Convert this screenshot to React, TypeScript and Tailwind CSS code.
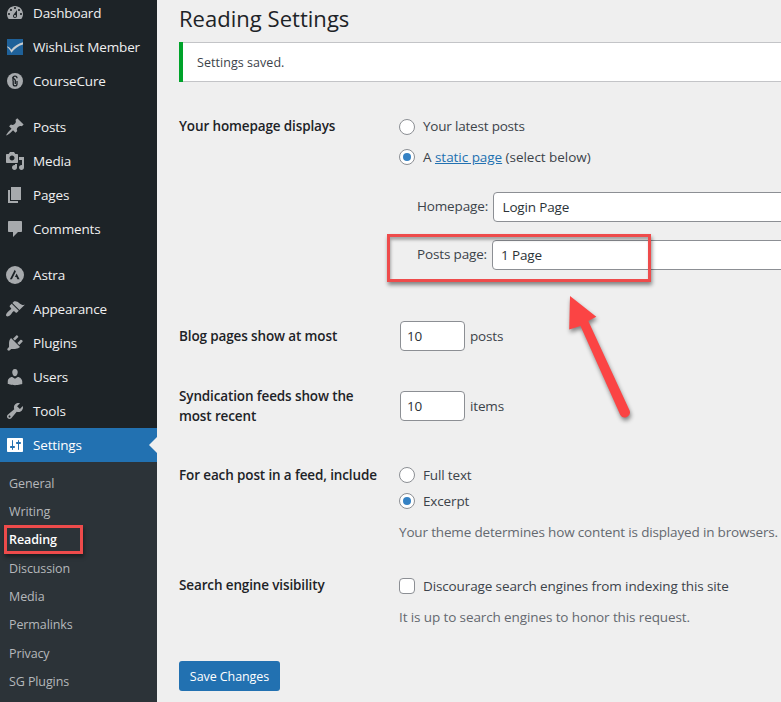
import React from 'react';
import clsx from 'clsx';

const menuGroups = [
  [
    {
      name: 'Dashboard',
      path: 'M3.76 16h12.48c1.1-1.37 1.76-3.11 1.76-5 0-4.42-3.58-8-8-8s-8 3.58-8 8c0 1.89.66 3.63 1.76 5zM10 4c.55 0 1 .45 1 1s-.45 1-1 1-1-.45-1-1 .45-1 1-1zM6 6c.55 0 1 .45 1 1s-.45 1-1 1-1-.45-1-1 .45-1 1-1zm8 0c.55 0 1 .45 1 1s-.45 1-1 1-1-.45-1-1 .45-1 1-1zm-5.37 5.55L12 7v6c0 1.1-.9 2-2 2s-2-.9-2-2c0-.57.24-1.08.63-1.45zM4 10c.55 0 1 .45 1 1s-.45 1-1 1-1-.45-1-1 .45-1 1-1zm12 0c.55 0 1 .45 1 1s-.45 1-1 1-1-.45-1-1 .45-1 1-1zm-5 3c0-.55-.45-1-1-1s-1 .45-1 1 .45 1 1 1 1-.45 1-1z',
    },
    { name: 'WishList Member' },
    { name: 'CourseCure' },
  ],
  [
    {
      name: 'Posts',
      path: 'M10.44 3.02l1.82-1.82 6.36 6.35-1.83 1.82c-1.05-.68-2.48-.57-3.41.36l-.75.75c-.92.93-1.04 2.35-.35 3.41l-1.83 1.82-2.41-2.41-2.8 2.79c-.42.42-3.38 2.71-3.8 2.29s1.86-3.39 2.28-3.81l2.79-2.79L4.1 9.36l1.83-1.82c1.05.69 2.48.57 3.4-.36l.75-.75c.93-.92 1.05-2.35.36-3.41z',
    },
    {
      name: 'Media',
      path: 'M13 11V4c0-.55-.45-1-1-1h-1.67L9 1H5L3.67 3H2c-.55 0-1 .45-1 1v7c0 .55.45 1 1 1h10c.55 0 1-.45 1-1zM7 4.5c1.38 0 2.5 1.12 2.5 2.5S8.38 9.5 7 9.5 4.5 8.38 4.5 7 5.62 4.5 7 4.5zM14 6h5v10.5c0 1.38-1.12 2.5-2.5 2.5S14 17.88 14 16.5s1.12-2.5 2.5-2.5c.17 0 .34.02.5.05V9h-3V6zm-4 8.05V13h2v3.5c0 1.38-1.12 2.5-2.5 2.5S7 17.88 7 16.5 8.12 14 9.5 14c.17 0 .34.02.5.05z',
    },
    { name: 'Pages', path: 'M6 15V2h10v13H6zm-1 1h8v2H3V5h2v11z' },
    {
      name: 'Comments',
      path: 'M4 2h12c.55 0 1 .45 1 1v9c0 .55-.45 1-1 1h-3l-5 5v-5H4c-.55 0-1-.45-1-1V3c0-.55.45-1 1-1z',
    },
  ],
  [
    { name: 'Astra' },
    {
      name: 'Appearance',
      path: 'M14.48 11.06L7.41 3.99l1.5-1.5c.5-.56 2.3-.47 3.51.32 1.21.8 1.43 1.28 2.91 2.1 1.18.64 2.45 1.26 4.45.85zm-.71.71L6.7 4.7 4.93 6.47c-.39.39-.39 1.02 0 1.41l1.06 1.06c.39.39.39 1.03 0 1.42-.6.6-1.43 1.11-2.21 1.69-.35.26-.7.53-1.01.84C1.43 14.23.4 16.08 1.4 17.07c.99 1 2.84-.03 4.18-1.36.31-.31.58-.66.85-1.02.57-.78 1.08-1.61 1.69-2.21.39-.39 1.02-.39 1.41 0l1.06 1.06c.39.39 1.02.39 1.41 0z',
    },
    {
      name: 'Plugins',
      path: 'M13.11 4.36L9.87 7.6 8 5.73l3.24-3.24c.35-.34 1.05-.2 1.56.32.52.51.66 1.21.31 1.55zm-8 1.77l.91-1.12 9.01 9.01-1.19.84c-.71.71-2.63 1.16-3.82 1.16H6.14L4.9 17.26c-.59.59-1.54.59-2.12 0-.59-.58-.59-1.53 0-2.12l1.24-1.24v-3.88c0-1.13.4-3.19 1.09-3.89zm7.26 3.97l3.24-3.24c.34-.35 1.04-.21 1.55.31.52.51.66 1.21.31 1.55l-3.24 3.25z',
    },
    {
      name: 'Users',
      path: 'M10 9.25c-2.27 0-2.73-3.44-2.73-3.44C7 4.02 7.82 2 9.97 2c2.16 0 2.98 2.02 2.71 3.81 0 0-.41 3.44-2.68 3.44zm0 2.57L12.72 10c2.39 0 4.52 2.33 4.52 4.53v2.49s-3.65 1.13-7.24 1.13c-3.65 0-7.24-1.13-7.24-1.13v-2.49c0-2.25 1.94-4.48 4.47-4.48z',
    },
    {
      name: 'Tools',
      path: 'M16.68 9.77c-1.34 1.34-3.3 1.67-4.95.99l-5.41 6.52c-.99.99-2.59.99-3.58 0s-.99-2.59 0-3.57l6.52-5.42c-.68-1.65-.35-3.61.99-4.95 1.28-1.28 3.12-1.62 4.72-1.06l-2.89 2.89 2.82 2.82 2.86-2.87c.53 1.58.18 3.39-1.08 4.65zM3.81 16.21c.4.39 1.04.39 1.43 0 .4-.4.4-1.04 0-1.43-.39-.4-1.03-.4-1.43 0-.39.39-.39 1.03 0 1.43z',
    },
    {
      name: 'Settings',
      active: true,
      path: 'M18 16V4c0-.55-.45-1-1-1H3c-.55 0-1 .45-1 1v12c0 .55.45 1 1 1h14c.55 0 1-.45 1-1zM8 11h1c.55 0 1 .45 1 1s-.45 1-1 1H8v1.5c0 .28-.22.5-.5.5s-.5-.22-.5-.5V13H6c-.55 0-1-.45-1-1s.45-1 1-1h1V5.5c0-.28.22-.5.5-.5s.5.22.5.5V11zm5-2h-1c-.55 0-1-.45-1-1s.45-1 1-1h1V5.5c0-.28.22-.5.5-.5s.5.22.5.5V7h1c.55 0 1 .45 1 1s-.45 1-1 1h-1v5.5c0 .28-.22.5-.5.5s-.5-.22-.5-.5V9z',
    },
  ],
];

const subMenu = ['General', 'Writing', 'Reading', 'Discussion', 'Media', 'Permalinks', 'Privacy', 'SG Plugins'];

function MenuIcon({ name, path }: { name: string; path?: string }) {
  return (
    <svg viewBox="0 0 20 20" className="w-5 h-5 shrink-0" fill="currentColor">
      {path && <path d={path} fillRule="evenodd" />}
      {name === 'WishList Member' && (
        <>
          <rect x="2" y="2" width="16" height="16" fill="#1f6199" />
          <path d="M2 9.4c1.800.2 3.200 1.500 4.300 3.400C9 9.300 13 6.500 18 5.200v2.200C13 8.900 9.500 11.500 6.400 15.800 5 12.800 3.800 11 2 9.900z" fill="#c9cdd0" />
        </>
      )}
      {name === 'CourseCure' && (
        <>
          <circle cx="10" cy="10" r="8" />
          <path d="M8 10V7.200a2 2 0 0 1 4 0M8.200 10v3a1.900 1.900 0 0 0 3.800 0v-3" fill="none" stroke="#1d2327" strokeWidth="1.300" />
          <path d="M7.500 6.200l2.300 2.600M10.300 8.500v4.500" stroke="#1d2327" strokeWidth="1.300" />
        </>
      )}
      {name === 'Astra' && (
        <>
          <circle cx="10" cy="10" r="9" />
          <path d="M9.700 4.800L4.900 14.300h2L10.900 6.600zM11.600 8.500l-1.700 3.400h1.500l1 2.400h2.200z" fill="#1d2327" />
        </>
      )}
    </svg>
  );
}

function Sidebar() {
  return (
    <aside className="w-[157px] shrink-0 bg-[#1d2327] flex flex-col">
      <nav className="-mt-1 flex flex-col gap-3">
        {menuGroups.map((group, i) => (
          <div key={i}>
            {group.map((item) => (
              <div
                key={item.name}
                className={clsx(
                  'relative flex items-center h-[34px] pl-[5px] gap-2 text-[13.500px] tracking-[-0.160px]',
                  item.active ? 'bg-[#2271b1] text-white' : 'text-[#a7aaad]'
                )}
              >
                <MenuIcon name={item.name} path={item.path} />
                <span className={item.active ? 'text-white' : 'text-[#f0f0f1]'}>{item.name}</span>
                {item.active && (
                  <span className="absolute right-0 top-[9px] border-y-8 border-r-8 border-y-transparent border-r-[#efefef]"></span>
                )}
              </div>
            ))}
          </div>
        ))}
      </nav>
      <div className="flex-1 bg-[#2c3338] pt-2">
        {subMenu.map((name) => (
          <div
            key={name}
            className={clsx(
              'relative h-[28.300px] pl-[9px] flex items-center text-[12.500px] tracking-[-0.100px]',
              name === 'Reading' ? 'text-white font-semibold' : 'text-[#b5b8bb]'
            )}
          >
            {name}
            {name === 'Reading' && (
              <span className="absolute left-1 top-[-1.600px] w-[79px] h-[29px] border-3 border-[#ee4b4b] shadow-[1px_3px_4px_rgba(0,0,0,0.4)]"></span>
            )}
          </div>
        ))}
      </div>
    </aside>
  );
}

function Radio({ checked }: { checked?: boolean }) {
  return (
    <span className="w-4 h-4 rounded-full border border-[#8c8f94] bg-white flex items-center justify-center shrink-0">
      {checked && <span className="w-2 h-2 rounded-full bg-[#3582c4]"></span>}
    </span>
  );
}

function Row({ label, className, children }: { label: React.ReactNode; className: string; children: React.ReactNode }) {
  return (
    <div className={clsx('grid grid-cols-[220px_1fr]', className)}>
      <div className="font-semibold text-[#1d2327] text-[13.500px] leading-5 tracking-[-0.130px]">{label}</div>
      <div>{children}</div>
    </div>
  );
}

function NumberField({ value, unit }: { value: number; unit: string }) {
  return (
    <div className="flex items-center gap-[5px] -mt-[5px] ml-px">
      <span className="w-[65px] h-[30px] rounded border border-[#8c8f94] bg-white flex items-center pl-[6px] text-[#2c3338]">
        {value}
      </span>
      <span>{unit}</span>
    </div>
  );
}

export default function App() {
  return (
    <div className="flex w-[781px] h-[702px] overflow-hidden bg-[#efefef] font-['Open_Sans','Noto_Sans',sans-serif] whitespace-nowrap">
      <Sidebar />
      <main className="relative flex-1 min-w-0 pl-[22px] text-[13.500px] leading-5 tracking-[-0.150px] text-[#3c434a]">
        <h1 className="text-[22px] leading-[30px] pt-[3px] h-[42px] tracking-[0.030px] text-[#1d2327]">Reading Settings</h1>
        <div className="h-10 bg-white border-y border-[#c3c4c7] flex items-stretch">
          <div className="w-1 -my-px bg-[#00a32a]"></div>
          <p className="self-center pt-px pl-[14px] text-[12.500px] tracking-[0.050px]">Settings saved.</p>
        </div>

        <Row label="Your homepage displays" className="pt-[34px] h-[244px]">
          <div className="flex items-center gap-2 h-[22px]">
            <Radio />
            <span className="pb-0.5 tracking-[-0.200px]">Your latest posts</span>
          </div>
          <div className="flex items-center gap-2 h-[22px] mt-2">
            <Radio checked />
            <span className="tracking-[-0.040px]">
              A <a className="text-[#2271b1] underline">static page</a> (select below)
            </span>
          </div>
          <div className="flex items-center h-[30px] mt-6 pl-[18px]">
            <span className="w-[76px] pb-0.5">Homepage:</span>
            <span className="flex-1 h-full -mr-2 rounded border border-[#8c8f94] bg-white flex items-center pl-[8.500px] text-[#2c3338]">Login Page</span>
          </div>
          <div className="relative flex items-center h-[30px] mt-[18px] pl-[18px]">
            <span className="w-[75px] pb-0.5">Posts page:</span>
            <span className="flex-1 h-full -mr-2 rounded border border-[#8c8f94] bg-white flex items-center pl-[8px] text-[#2c3338]">1 Page</span>
            <span className="absolute left-[-12px] top-[-6px] w-[264px] h-12 border-3 border-[#ee4b4b] shadow-[1px_3px_4px_rgba(0,0,0,0.45),inset_1px_3px_3px_rgba(0,0,0,0.3)]"></span>
          </div>
        </Row>
        <Row label="Blog pages show at most" className="h-[60px]">
          <NumberField value={10} unit="posts" />
        </Row>
        <Row label={<>Syndication feeds show the<br />most recent</>} className="h-[79px]">
          <div className="pt-[10px]">
            <NumberField value={10} unit="items" />
          </div>
        </Row>
        <Row label="For each post in a feed, include" className="h-[110px]">
          <div className="flex items-center gap-2 h-5">
            <Radio />
            <span>Full text</span>
          </div>
          <div className="flex items-center gap-2 h-5 mt-[6px]">
            <Radio checked />
            <span>Excerpt</span>
          </div>
          <p className="mt-[11px] text-[#646970] tracking-[-0.165px]">Your theme determines how content is displayed in browsers.</p>
        </Row>
        <Row label="Search engine visibility" className="h-[86px]">
          <div className="flex items-center gap-2 h-[22px]">
            <span className="w-4 h-4 rounded border border-[#8c8f94] bg-white"></span>
            <span className="tracking-[-0.120px]">Discourage search engines from indexing this site</span>
          </div>
          <p className="mt-[10px] text-[#646970] tracking-[-0.110px]">It is up to search engines to honor this request.</p>
        </Row>
        <button className="w-[101px] h-[30px] pt-px rounded-[3px] bg-[#2271b1] text-white text-[12.500px] tracking-[-0.080px]">Save Changes</button>

        {/* Callout arrow */}
        <svg viewBox="0 0 80 140" className="absolute left-[403px] top-[290px] w-20 h-[140px] drop-shadow-[1px_3px_2px_rgba(0,0,0,0.45)]">
          <path d="M10 6l26.300 20.800-8 4.200 41.300 89.500a5.200 5.200 0 0 1-9.300 4.500L20.500 36 9.200 39.500z" fill="#fb4444" />
        </svg>
      </main>
    </div>
  );
}
